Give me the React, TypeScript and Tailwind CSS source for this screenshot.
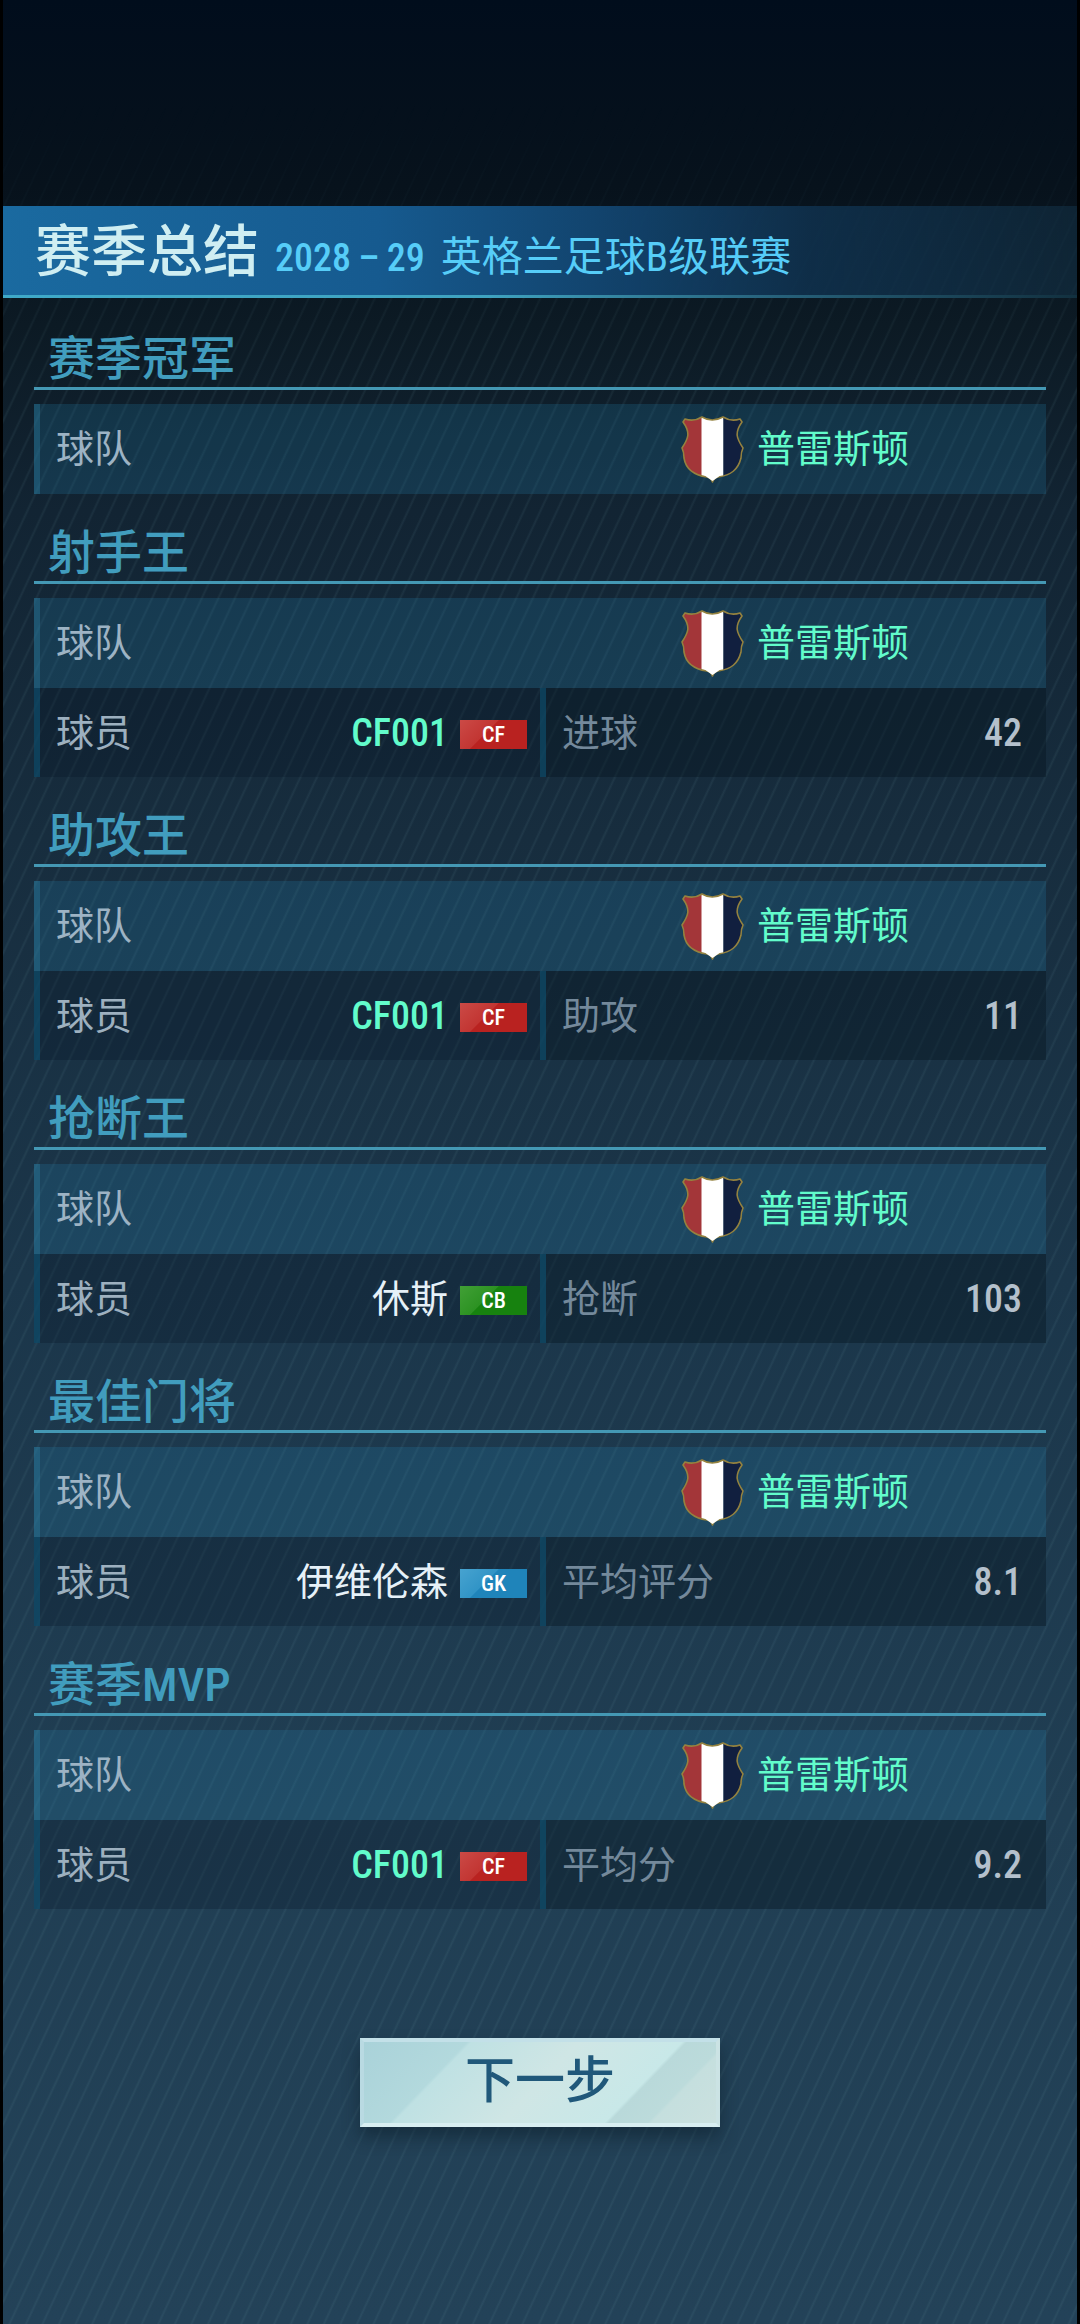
import React from 'react';

type Position = 'CF' | 'CB' | 'GK';

interface Award {
  title: string;
  team: string;
  player?: { name: string; position: Position; own?: boolean };
  stat?: { label: string; value: string };
}

const LABEL = { team: '球队', player: '球员' };

const AWARDS: Award[] = [
  { title: '赛季冠军', team: '普雷斯顿' },
  {
    title: '射手王',
    team: '普雷斯顿',
    player: { name: 'CF001', position: 'CF', own: true },
    stat: { label: '进球', value: '42' },
  },
  {
    title: '助攻王',
    team: '普雷斯顿',
    player: { name: 'CF001', position: 'CF', own: true },
    stat: { label: '助攻', value: '11' },
  },
  {
    title: '抢断王',
    team: '普雷斯顿',
    player: { name: '休斯', position: 'CB' },
    stat: { label: '抢断', value: '103' },
  },
  {
    title: '最佳门将',
    team: '普雷斯顿',
    player: { name: '伊维伦森', position: 'GK' },
    stat: { label: '平均评分', value: '8.1' },
  },
  {
    title: '赛季MVP',
    team: '普雷斯顿',
    player: { name: 'CF001', position: 'CF', own: true },
    stat: { label: '平均分', value: '9.2' },
  },
];

const POSITION_CLASS: Record<Position, string> = {
  CF: 'bg-[linear-gradient(135deg,#cb4a46_0%,#c23532_40%,#b92220_41%,#b92220_100%)]',
  CB: 'bg-[linear-gradient(135deg,#41a036_0%,#2c9222_40%,#17820f_41%,#17820f_100%)]',
  GK: 'bg-[linear-gradient(135deg,#47a3d0_0%,#3194c6_40%,#1f84ba_41%,#1f84ba_100%)]',
};

// ─── Pieces ──────────────────────────────────────────────────────────────────

const Crest: React.FC<{ id: string }> = ({ id }) => {
  const outline =
    'M5 4 Q14 7 22 2 Q32 8 43 2 Q51 7 60 4 L62 7 C54 18 57 24 63 33 C61 37 61 39 61 43 C58 55 51 60 38 62 Q34 63 32.500 67 Q31 63 27 62 C14 60 6 55 4 43 C4 39 4 37 2 33 C8 24 11 18 3 7 Z';
  return (
    <svg viewBox="0 0 65 68" className="h-[68px] w-[65px] shrink-0" aria-hidden="true">
      <defs>
        <clipPath id={id}>
          <path d={outline} />
        </clipPath>
      </defs>
      <g clipPath={`url(#${id})`}>
        <rect width="22" height="68" fill="#a33639" />
        <rect x="21.500" width="22" height="68" fill="#ffffff" />
        <rect x="43.500" width="22" height="68" fill="#111f3f" />
      </g>
      <path d={outline} fill="none" stroke="#94823f" strokeWidth="1.600" strokeLinejoin="round" />
      <path d="M24 60 L32.500 66 L41 60 Z" fill="#ffffff" />
    </svg>
  );
};

const PositionBadge: React.FC<{ position: Position }> = ({ position }) => (
  <span
    className={`mt-1 flex h-[29px] w-[67px] items-center justify-center text-[22px] leading-none font-medium text-white ${POSITION_CLASS[position]}`}
  >
    {position}
  </span>
);

const AwardSection: React.FC<{ award: Award }> = ({ award }) => {
  const { title, team, player, stat } = award;
  return (
    <section>
      <h2 className="flex h-[90px] items-end border-b-3 border-[#4498b4] px-[14px] pb-1 text-[47px] leading-[48px] font-medium text-[#419dbe]">
        {title}
      </h2>
      <dl className="mt-[14px] text-[38px] leading-[48px]">
        <div className="grid h-[90px] grid-cols-2 items-center border-l-6 border-[#2d86ac]/35 bg-[#2486b0]/22">
          <dt className="pl-4 text-[#9db3c4]">{LABEL.team}</dt>
          <dd className="flex items-center justify-center gap-3 text-[#62fccb]">
            <Crest id={`crest-${title}`} />
            {team}
          </dd>
        </div>
        {player && stat && (
          <div className="grid h-[89px] grid-cols-2">
            <div className="flex items-center justify-between border-l-6 border-[#0d5474]/60 bg-[#04101f]/25 pr-[13px] pl-4">
              <dt className="text-[#9db0bf]">{LABEL.player}</dt>
              <dd
                className={`flex items-center gap-3 ${player.own ? 'font-medium text-[#62fccb]' : 'text-[#e6f1f8]'}`}
              >
                {player.name}
                <PositionBadge position={player.position} />
              </dd>
            </div>
            <div className="flex items-center justify-between border-l-6 border-[#0d5474]/60 bg-[#06131f]/40 pr-6 pl-4">
              <dt className="text-[#74899b]">{stat.label}</dt>
              <dd className="font-medium text-[#b4c0cc]">{stat.value}</dd>
            </div>
          </div>
        )}
      </dl>
    </section>
  );
};

// ─── Page ────────────────────────────────────────────────────────────────────

export default function App() {
  return (
    <div className="relative isolate flex min-h-screen flex-col border-x-3 border-black bg-[linear-gradient(180deg,#010d1c_0%,#07121c_8%,#0c1a24_14%,#122433_22%,#172d3e_36%,#1b364a_55%,#203e53_78%,#234258_100%)] pt-[206px] font-['Roboto_Condensed','Noto_Sans_CJK_SC',sans-serif]">
      {/* pinstripe overlay, fades out towards the top edge */}
      <div className="pointer-events-none absolute inset-0 -z-10 bg-[repeating-linear-gradient(115deg,transparent_0px,transparent_11px,rgba(130,180,190,0.09)_13px,transparent_15px)] [mask-image:linear-gradient(180deg,transparent_100px,black_400px)]" />

      <header className="h-[92px] border-b-3 bg-[linear-gradient(90deg,#1a6aa0_0%,#165a8f_35%,#12446e_55%,rgba(15,48,76,0.9)_75%,rgba(20,52,74,0.5)_100%)] [border-image:linear-gradient(90deg,#3fa9c8_0%,#3fa3c0_45%,#28657f_70%,#12303f_100%)_1]">
        <div className="flex items-end gap-4 pl-8">
          <h1 className="text-[56px] leading-[92px] font-medium text-[#cfeef2]">赛季总结</h1>
          <p className="flex items-baseline gap-4 pb-4 text-[41px] leading-[48px] text-[#56cdf8]">
            <span className="text-[38px] font-medium">2028&#8201;–&#8201;29</span>
            <span>英格兰足球B级联赛</span>
          </p>
        </div>
      </header>

      <main className="px-[31px] pt-[2px]">
        {AWARDS.map((award) => (
          <AwardSection key={award.title} award={award} />
        ))}
      </main>

      <footer className="flex justify-center pt-[129px] pb-16">
        <button
          type="button"
          className="h-[89px] w-[360px] border-4 border-t-[#c3e0e8] border-r-[#cbe3e4] border-b-[#d8eef1] border-l-[#b9dae2] bg-[linear-gradient(134deg,#a9d2d9_0%,#b3d9dd_24%,#bfe1e3_25%,#cfe6e5_50%,#c8e8e8_74%,#b9d9da_75%,#bcdbdb_84%,#c5dfde_85%,#cbe1df_100%)] pb-1 text-[50px] leading-[72px] font-medium text-[#20587a] shadow-[0_10px_16px_rgba(8,24,36,0.45)]"
        >
          下一步
        </button>
      </footer>
    </div>
  );
}
